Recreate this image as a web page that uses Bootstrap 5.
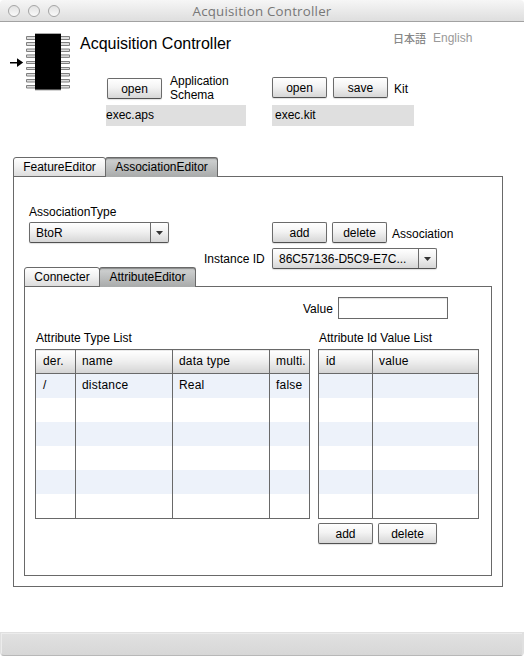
<!DOCTYPE html>
<html lang="en">
<head>
<meta charset="utf-8">
<meta name="viewport" content="width=device-width, initial-scale=1">
<title>Acquisition Controller</title>
<link rel="stylesheet" href="https://cdn.jsdelivr.net/npm/bootstrap@5.3.0/dist/css/bootstrap.min.css">
<style>
body{width:524px;height:656px;overflow:hidden;font:12px/14px "Liberation Sans",Arial,"Noto Sans CJK JP",sans-serif;color:#000;background:#fff}
.titlebar{height:22px;background:linear-gradient(#f6f6f6,#dedede);border-bottom:1px solid #a2a2a2;border-radius:4px 4px 0 0}
.win-title{font:13.3px/22px "Open Sans","Noto Sans",sans-serif;color:#777;letter-spacing:.22px}
.lights{left:8px;top:5px}
.light{width:12px;height:12px;border:1px solid #a5a5a5;border-radius:50%;background:linear-gradient(#e2e2e2,#fafafa)}
.header{height:135px}
#chip{height:70px;margin-bottom:-15px;flex:none}
.app-name{font-size:16px;line-height:18px;width:313px;margin:13px 0 0 10px}
.lang{color:#999;margin-top:9px}
.lang-ja{font:500 11px/14px "Noto Sans CJK JP",sans-serif;width:40px;color:#888}
.file-a{width:140px;margin-left:106px}
.file-b{width:142px;margin-left:26px}
.file-tools{height:28px}
.file-name{height:21px;background:#dfdfdf;line-height:20px}
.kit-name{padding-left:3px}
.schema{margin:-3px 0 0 8px}
.kit{margin:5px 0 0 6px}
.btn.push{width:55px;height:21px;padding:0;border:1px solid #6b6b6b;border-bottom-color:#515151;border-radius:2px;background:linear-gradient(#fff,#f3f3f3 45%,#d6d6d6);font-size:12px;line-height:20px;color:#000;box-shadow:0 1px 1px #0000001f;flex:none}
.btn.push.one{margin:1px 0 0 1px}
.btn.push.wide{width:59px}
.second{margin-left:6px}
.del{margin-left:5px}
.drop{height:21px;border:1px solid #6b6b6b;border-bottom-color:#515151;border-radius:2px;background:linear-gradient(#fff,#f1f1f1 45%,#d6d6d6);box-shadow:0 1px 1px #0000001f;line-height:21px;padding-left:6px;flex:none}
.drop-arrow{width:18px;height:19px;border-left:1px solid #6b6b6b}
.nav-tabs.bar{--bs-nav-tabs-border-width:0;height:19px}
.bar .nav-link{height:20px;padding:0;border:1px solid #696969;border-bottom:0;border-radius:3px 3px 0 0;color:#000;line-height:19px;text-align:center;background:linear-gradient(#fff,#f2f2f2 45%,#dcdcdc);margin:0}
.bar .nav-link.active{color:#000;background:linear-gradient(#b7b9b9,#cbcdcd 15%,#a8aaaa);border:1px solid #696969;border-bottom:0;box-shadow:inset 0 1px #8f9191;margin-left:-1px}
.bar .w-feature,.bar .w-assoc,.bar .w-conn,.bar .w-attr{border-bottom:1px solid #696969}
.w-feature{width:93px}.w-assoc{width:113px}.w-conn{width:76px}.w-attr{width:97px}
.outer-area{margin-left:13px;width:490px}
.outer-pane{border:1px solid #696969;height:411px}
.inner-area{margin-left:10px;width:468px}
.inner-pane{border:1px solid #696969;height:290px}
.controls{height:90px}
.kind{width:140px;margin:28px 0 0 15px}
.kind .drop{margin-top:3px}
.instance{margin:45px 0 0 103px}
.assoc-label{margin:5px 0 0 5px}
.id-row{margin:5px 0 0 -68px}
.id-label{width:68px;padding-top:4px}
.id-drop{width:165px}
.value-row{margin:10px 0 0 278px}
.value-label{width:35px;padding-top:5px}
.value-input.form-control{width:110px;height:22px;padding:0 4px;border:1px solid #696969;border-radius:0;box-shadow:inset 0 1px 1px #00000020;font-size:12px}
.lists{margin-top:12px}
.type-list{margin-left:10px;width:275px}
.value-list{margin-left:8px;width:161px}
.list-title{padding-left:1px}
.grid-table{border-collapse:collapse;table-layout:fixed;margin-top:4px}
.grid-table th{height:24px;font-weight:400;padding:0 0 1px 6px;border:1px solid #696969;background:linear-gradient(#fff,#f0f0f0 45%,#d3d3d3)}
.grid-table td{height:24px;padding:0 0 2px 6px;border:solid #696969;border-width:0 1px;line-height:14px}
.grid-table tr>:first-child{padding-left:7px}
.grid-table tr>*{letter-spacing:.2px;white-space:nowrap}
.grid-table tbody tr:nth-child(odd){background:#edf2fa}
.grid-table tbody tr:last-child td{border-bottom-width:1px;height:25px}
.types{width:275px}.values{width:161px}
.c40{width:40px}.c97{width:97px}.c54{width:54px}.c106{width:106px}
.row-actions{margin-top:4px}
.statusbar{margin-top:45px;height:24px;background:linear-gradient(#e1e1e1,#d7d7d7);border:1px solid #e0e0e0;border-width:1px 2px 1px 1px;border-bottom-color:#b8b8b8;border-radius:0 0 4px 4px;box-shadow:inset 1px 1px #ececec}
</style>
</head>
<body>
<header class="titlebar position-relative text-center">
  <div class="lights position-absolute d-flex gap-2"><i class="light"></i><i class="light"></i><i class="light"></i></div>
  <div class="win-title">Acquisition Controller</div>
</header>
<section class="header">
  <div class="d-flex align-items-start">
    <svg id="chip" width="70" height="70" viewBox="0 22 70 70">
      <path d="M10 62h7v-3.7l6.2 4.3-6.2 4.3v-3.4h-7z" fill="#000"/>
      <path fill="#ddd" stroke="#808080" d="M26.500 36.500h43v3h-43zM26.500 42.500h43v3h-43zM26.500 49h43v2.500h-43zM26.500 54.900h43v2.500h-43zM26.500 61.500h43v2h-43zM26.500 67.500h43v2h-43zM26.500 73.500h43v2.500h-43zM26.500 79.500h43v2.500h-43zM26.500 85.500h43v2.500h-43z"/>
      <path d="M35 33h26v57.500H35z" fill="#aaa"/><path d="M35 34h26v55.500H35z" fill="#000"/>
    </svg>
    <div class="app-name">Acquisition Controller</div>
    <div class="lang d-flex"><span class="lang-ja">日本語</span><span>English</span></div>
  </div>
  <div class="d-flex">
    <div class="file-a">
      <div class="d-flex align-items-start file-tools"><button class="btn push one">open</button><span class="schema">Application<br>Schema</span></div>
      <div class="file-name">exec.aps</div>
    </div>
    <div class="file-b">
      <div class="d-flex align-items-start file-tools"><button class="btn push">open</button><button class="btn push second">save</button><span class="kit">Kit</span></div>
      <div class="file-name kit-name">exec.kit</div>
    </div>
  </div>
</section>
<main class="outer-area">
  <nav class="nav nav-tabs bar"><a class="nav-link w-feature">FeatureEditor</a><a class="nav-link active w-assoc">AssociationEditor</a></nav>
  <div class="outer-pane">
    <div class="controls d-flex">
      <div class="kind">
        <label class="d-block">AssociationType</label>
        <div class="drop d-flex">BtoR<span class="drop-arrow ms-auto d-flex align-items-center justify-content-center"><svg width="7" height="4"><path d="M0 0h7L3.5 4z" fill="#333"/></svg></span></div>
      </div>
      <div class="instance">
        <div class="d-flex"><button class="btn push">add</button><button class="btn push del">delete</button><span class="assoc-label">Association</span></div>
        <div class="d-flex id-row"><label class="id-label">Instance ID</label>
          <div class="drop d-flex id-drop">86C57136-D5C9-E7C...<span class="drop-arrow ms-auto d-flex align-items-center justify-content-center"><svg width="7" height="4"><path d="M0 0h7L3.5 4z" fill="#333"/></svg></span></div></div>
      </div>
    </div>
    <div class="inner-area">
      <nav class="nav nav-tabs bar"><a class="nav-link w-conn">Connecter</a><a class="nav-link active w-attr">AttributeEditor</a></nav>
      <div class="inner-pane">
        <div class="value-row d-flex"><label class="value-label" for="val">Value</label><input id="val" class="form-control value-input"></div>
        <div class="d-flex lists">
          <div class="type-list"><div class="list-title">Attribute Type List</div>
            <table class="grid-table types"><colgroup><col class="c40"><col class="c97"><col class="c97"><col class="c40"></colgroup>
              <thead><tr><th>der.</th><th>name</th><th>data type</th><th>multi.</th></tr></thead>
              <tbody><tr><td>/</td><td>distance</td><td>Real</td><td>false</td></tr><tr><td></td><td></td><td></td><td></td></tr><tr><td></td><td></td><td></td><td></td></tr><tr><td></td><td></td><td></td><td></td></tr><tr><td></td><td></td><td></td><td></td></tr><tr><td></td><td></td><td></td><td></td></tr></tbody></table>
          </div>
          <div class="value-list"><div class="list-title">Attribute Id Value List</div>
            <table class="grid-table values"><colgroup><col class="c54"><col class="c106"></colgroup>
              <thead><tr><th>id</th><th>value</th></tr></thead>
              <tbody><tr><td></td><td></td></tr><tr><td></td><td></td></tr><tr><td></td><td></td></tr><tr><td></td><td></td></tr><tr><td></td><td></td></tr><tr><td></td><td></td></tr></tbody></table>
            <div class="d-flex row-actions"><button class="btn push">add</button><button class="btn push wide del">delete</button></div>
          </div>
        </div>
      </div>
    </div>
  </div>
</main>
<footer class="statusbar"></footer>
<script src="https://cdn.jsdelivr.net/npm/bootstrap@5.3.0/dist/js/bootstrap.bundle.min.js"></script>
</body>
</html>
